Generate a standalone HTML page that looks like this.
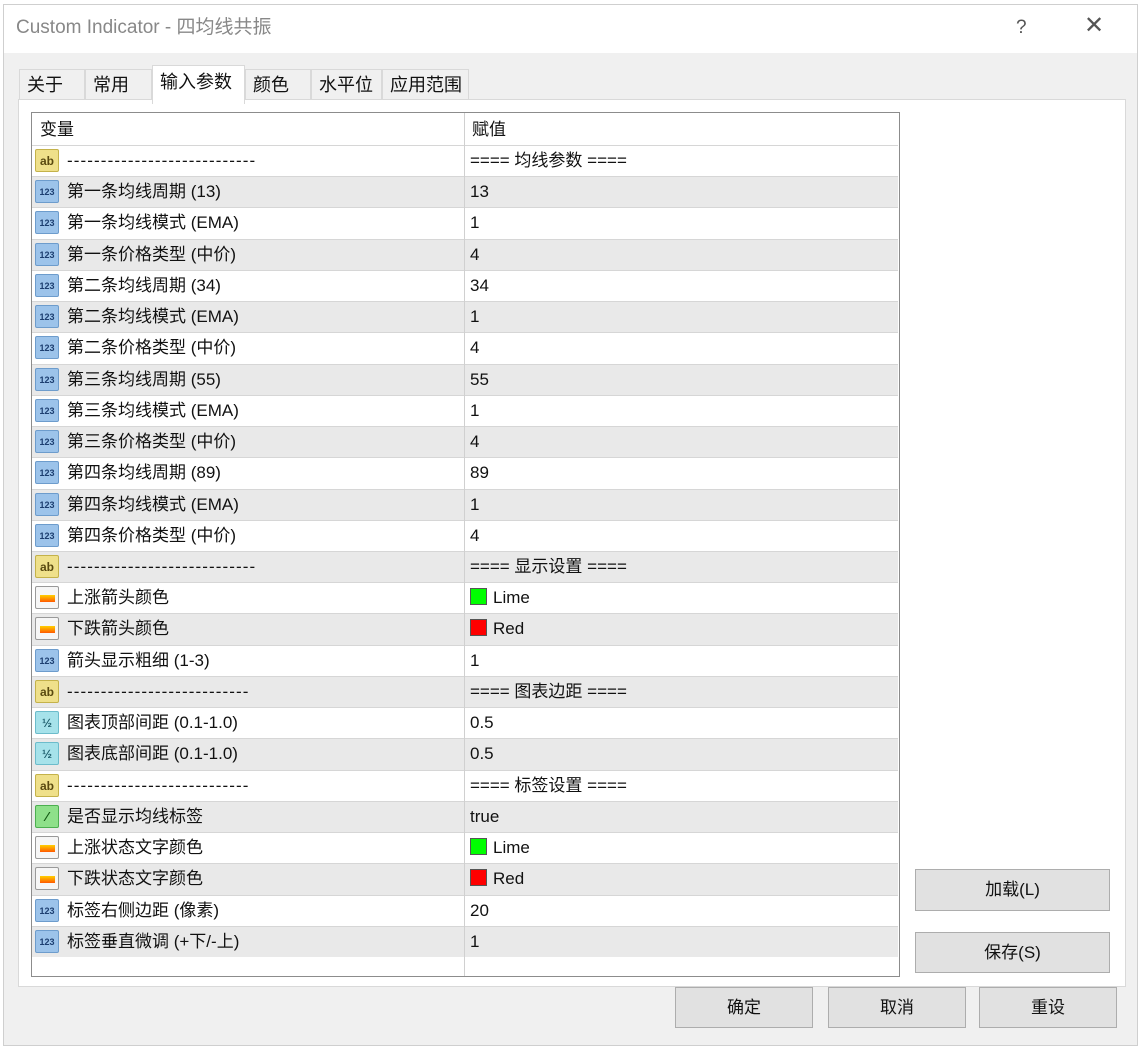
<!DOCTYPE html>
<html><head><meta charset="utf-8"><style>
*{box-sizing:border-box;margin:0;padding:0}
body{width:1142px;height:1050px;background:#fff;font-family:"Liberation Sans","Noto Sans CJK SC",sans-serif;position:relative;overflow:hidden;color:#111}
.dlg{position:absolute;left:3px;top:4px;width:1135px;height:1042px;border:1px solid #cfcfcf;background:#f0f0f0}
.title{position:absolute;left:0;top:0;width:100%;height:48px;background:#fff}
.title span{position:absolute;left:12px;top:10px;font-size:19px;line-height:26px;color:#888}
.tab{position:absolute;top:64px;height:34px;border:1px solid #d9d9d9;border-bottom:none;background:#f0f0f0;font-size:18px;line-height:30px;padding-left:7px}
.tab.act{top:60px;height:39px;background:#fff;z-index:2;line-height:32px}
.panel{position:absolute;left:14px;top:94px;width:1108px;height:888px;background:#fff;border:1px solid #d9d9d9}
.grid{position:absolute;left:27px;top:107px;width:869px;height:865px;border:1px solid #8c8c8c;background:#fff;overflow:hidden}
.hdr{position:absolute;left:0;top:0;width:100%;height:32px;font-size:17px;line-height:33px}
.hdr span{position:absolute;top:0}
.row{position:absolute;left:0;width:866px;height:31.23px;border-top:1px solid #d6d6d6;font-size:17px;line-height:29px}
.row.g{background:#e9e9e9}
.row .n{position:absolute;left:35px;top:0;white-space:nowrap}
.row .n.d{letter-spacing:1.1px}
.row .v{position:absolute;left:438px;top:0;white-space:nowrap}
.vline{position:absolute;left:432px;top:0;width:1px;height:100%;background:#d0d0d0;z-index:3}
.ic{position:absolute;left:3px;top:3px;width:24px;height:23px;border-radius:2px;font-size:9px;font-weight:bold;text-align:center;line-height:22px}
.i123{background:#9cc3ea;border:1px solid #6d9ccc;color:#1c3e70}
.iab{background:#efe08a;border:1px solid #c4b24a;color:#5a4a10;font-size:12px}
.ihalf{background:#a6e2ea;border:1px solid #6cbccb;color:#1f5f6e;font-size:12px}
.ibool{background:#8ee08a;border:1px solid #4caf50}
.icol{background:#f6f6f6;border:1px solid #999}
.icol:after{content:"";position:absolute;left:4px;top:8px;width:15px;height:7px;background:linear-gradient(#ffd000,#ff5a00)}
.sw{display:inline-block;width:17px;height:17px;vertical-align:-2px;margin-right:6px;border:1px solid #555}
.btn{position:absolute;background:#e1e1e1;border:1px solid #adadad;font-size:17px;text-align:center}
</style></head><body>
<div class="dlg">
<div class="title"><span>Custom Indicator - 四均线共振</span>
<span style="left:1012px;top:10px;font-size:19px;color:#555">?</span>
<span style="left:1080px;top:8px;font-size:24px;color:#555">✕</span></div>
<div class="tab" style="left:15px;width:66px">关于</div>
<div class="tab" style="left:81px;width:67px">常用</div>
<div class="tab act" style="left:148px;width:93px">输入参数</div>
<div class="tab" style="left:241px;width:66px">颜色</div>
<div class="tab" style="left:307px;width:71px">水平位</div>
<div class="tab" style="left:378px;width:87px">应用范围</div>
<div class="panel"></div>
<div class="grid">
<div class="vline"></div>
<div class="hdr"><span style="left:8px">变量</span><span style="left:440px">赋值</span></div>
<div id="rows"></div>
</div>
<div class="btn" style="left:911px;top:864px;width:195px;height:42px;line-height:40px">加载(L)</div>
<div class="btn" style="left:911px;top:927px;width:195px;height:41px;line-height:39px">保存(S)</div>
<div class="btn" style="left:671px;top:982px;width:138px;height:41px;line-height:39px">确定</div>
<div class="btn" style="left:824px;top:982px;width:138px;height:41px;line-height:39px">取消</div>
<div class="btn" style="left:975px;top:982px;width:138px;height:41px;line-height:39px">重设</div>
</div>
<script>
var R=[
["ab","----------------------------","==== 均线参数 ===="],
["123","第一条均线周期 (13)","13"],["123","第一条均线模式 (EMA)","1"],["123","第一条价格类型 (中价)","4"],
["123","第二条均线周期 (34)","34"],["123","第二条均线模式 (EMA)","1"],["123","第二条价格类型 (中价)","4"],
["123","第三条均线周期 (55)","55"],["123","第三条均线模式 (EMA)","1"],["123","第三条价格类型 (中价)","4"],
["123","第四条均线周期 (89)","89"],["123","第四条均线模式 (EMA)","1"],["123","第四条价格类型 (中价)","4"],
["ab","----------------------------","==== 显示设置 ===="],
["col","上涨箭头颜色","L"],["col","下跌箭头颜色","R"],["123","箭头显示粗细 (1-3)","1"],
["ab","---------------------------","==== 图表边距 ===="],
["half","图表顶部间距 (0.1-1.0)","0.5"],["half","图表底部间距 (0.1-1.0)","0.5"],
["ab","---------------------------","==== 标签设置 ===="],
["bool","是否显示均线标签","true"],["col","上涨状态文字颜色","L"],["col","下跌状态文字颜色","R"],
["123","标签右侧边距 (像素)","20"],["123","标签垂直微调 (+下/-上)","1"]];
var h="";
R.forEach(function(r,i){
 var top=32+i*31.23;
 var ic=r[0]=="123"?'<div class="ic i123">123</div>':r[0]=="ab"?'<div class="ic iab">ab</div>':r[0]=="half"?'<div class="ic ihalf">½</div>':r[0]=="bool"?'<div class="ic ibool" style="color:#135a13;font-size:13px">⁄</div>':'<div class="ic icol"></div>';
 var v=r[2]=="L"?'<span class="sw" style="background:#00ff00"></span>Lime':r[2]=="R"?'<span class="sw" style="background:#ff0000"></span>Red':r[2];
 h+='<div class="row'+(i%2?' g':'')+'" style="top:'+top+'px">'+ic+'<span class="n'+(r[0]=="ab"?' d':'')+'">'+r[1]+'</span><span class="v">'+v+'</span></div>';
});
document.getElementById("rows").innerHTML=h;
</script>
</body></html>
